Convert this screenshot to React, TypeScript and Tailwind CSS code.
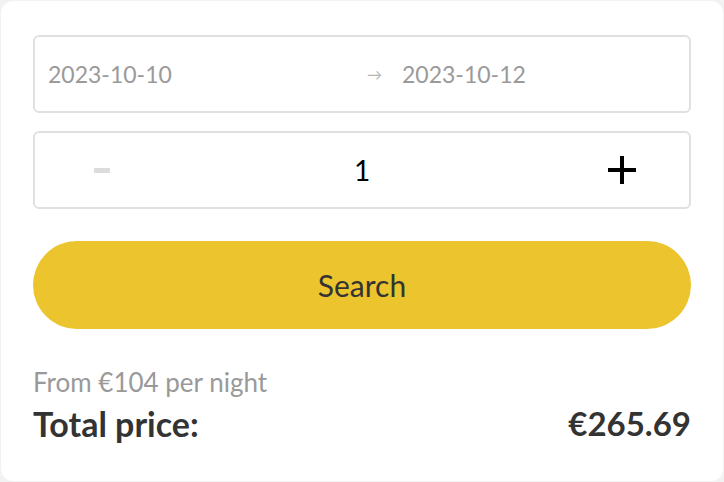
function DateRange() {
  return (
    <div className="flex h-[78px] items-center rounded-md border-2 border-[#e0e0e0] px-[13px] text-[23px] text-[#9a9a9a]">
      <span className="flex-1">2023-10-10</span>
      <span className="mr-[20px] text-[15px] text-[#b5b5b5]">→</span>
      <span className="w-[274px]">2023-10-12</span>
    </div>
  );
}

function PlusIcon() {
  return (
    <svg width="30" height="30" viewBox="0 0 30 30">
      <path d="M15 1v28M1 15h28" stroke="#000" strokeWidth="4" />
    </svg>
  );
}

function GuestCounter() {
  return (
    <div className="flex h-[78px] items-center rounded-md border-2 border-[#e0e0e0] px-[13px]">
      <button className="flex w-[108px] justify-center">
        <span className="block h-[5px] w-[16px] bg-[#dcdcdc]" />
      </button>
      <span className="flex-1 text-center text-[28px] text-black">1</span>
      <button className="flex w-[108px] justify-center">
        <PlusIcon />
      </button>
    </div>
  );
}

export default function App() {
  return (
    <div
      className="min-h-screen bg-[#f2f2f2] p-px"
      style={{ fontFamily: "Lato, 'Noto Sans', sans-serif" }}
    >
      <div className="flex h-[480px] flex-col rounded-xl bg-white px-[32px] pt-[34px]">
        <DateRange />
        <div className="mt-[18px]">
          <GuestCounter />
        </div>
        <button className="mt-[32px] h-[88px] w-full rounded-full bg-[#ebc42e] text-[30px] text-[#333333]">
          Search
        </button>
        <p className="mt-[37px] text-[26px] leading-tight text-[#999999]">From €104 per night</p>
        <div className="mt-[4px] flex items-center justify-between font-bold leading-tight text-[#333333]">
          <span className="text-[34px]">Total price:</span>
          <span className="text-[33px]">€265.69</span>
        </div>
      </div>
    </div>
  );
}
